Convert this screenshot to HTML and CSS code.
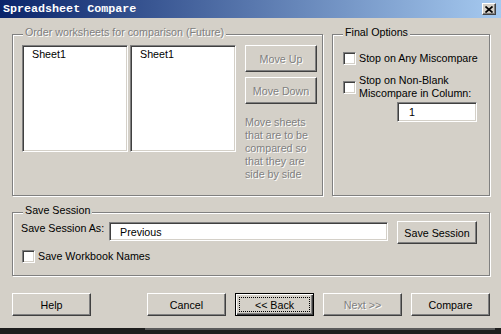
FILE: index.html
```html
<!DOCTYPE html>
<html lang="en">
<head>
    <meta charset="UTF-8">
    <meta name="viewport" content="width=device-width, initial-scale=1.0">
    <title>Spreadsheet Compare</title>
    <link rel="stylesheet" href="styles.css">
</head>
<body>

<div class="titlebar">
    <span class="title">Spreadsheet Compare</span>
    <span class="close-btn">
        <svg width="8" height="7" viewBox="0 0 8 7">
            <path d="M0.5 0.5 L7.5 6.5 M7.5 0.5 L0.5 6.5" stroke="#000" stroke-width="1.7" fill="none"/>
        </svg>
    </span>
</div>

<div class="dialog">
    <div class="top-row">
        <div class="group group-order">
            <span class="legend disabled-text">Order worksheets for comparison (Future)</span>
            <div class="listbox">
                <div class="list-item">Sheet1</div>
            </div>
            <div class="listbox listbox-right">
                <div class="list-item">Sheet1</div>
            </div>
            <div class="side-col">
                <button class="btn btn-move" disabled>Move Up</button>
                <button class="btn btn-move" disabled>Move Down</button>
                <p class="hint disabled-text">Move sheets<br>that are to be<br>compared so<br>that they are<br>side by side</p>
            </div>
        </div>

        <div class="group group-final">
            <span class="legend">Final Options</span>
            <label class="check-row">
                <input type="checkbox" class="checkbox">
                <span>Stop on Any Miscompare</span>
            </label>
            <label class="check-row check-row-second">
                <input type="checkbox" class="checkbox">
                <span>Stop on Non-Blank<br>Miscompare in Column:</span>
            </label>
            <input type="text" class="field field-column" value="1">
        </div>
    </div>

    <div class="group group-save">
        <span class="legend">Save Session</span>
        <div class="session-row">
            <label class="session-label" for="sessionName">Save Session As:</label>
            <input type="text" id="sessionName" class="field field-session" value="Previous">
            <button class="btn btn-save">Save Session</button>
        </div>
        <label class="check-row check-row-names">
            <input type="checkbox" class="checkbox">
            <span>Save Workbook Names</span>
        </label>
    </div>

    <div class="button-row">
        <button class="btn btn-nav">Help</button>
        <div class="nav-buttons">
            <button class="btn btn-nav">Cancel</button>
            <button class="btn btn-nav btn-default">&lt;&lt; Back</button>
            <button class="btn btn-nav" disabled>Next &gt;&gt;</button>
            <button class="btn btn-nav">Compare</button>
        </div>
    </div>
</div>

<div class="screen-edge">
    <div class="edge-line"></div>
</div>

</body>
</html>
```

FILE: styles.css
```css
body {
    margin: 0;
    width: 501px;
    height: 334px;
    overflow: hidden;
    background-color: #d4d0c8;
    font-family: "Liberation Sans", Arial, sans-serif;
    font-size: 10.7px;
    line-height: 13px;
    color: #000;
}
.titlebar {
    height: 18px;
    display: flex;
    align-items: center;
    justify-content: space-between;
    padding: 0 5px 0 3px;
    background: linear-gradient(to right, #0a246a, #a6caf0);
}
.title {
    color: #fff;
    font-family: "Liberation Mono", monospace;
    font-weight: bold;
    font-size: 11.7px;
}
.close-btn {
    width: 14px;
    height: 12px;
    box-sizing: border-box;
    display: flex;
    align-items: center;
    justify-content: center;
    background-color: #d4d0c8;
    border: 1px solid;
    border-color: #fff #404040 #404040 #fff;
    box-shadow: inset -1px -1px #808080;
}
.dialog {
    padding: 16px 11px 0 12px;
}
.top-row {
    display: flex;
    gap: 9px;
}
.group {
    position: relative;
    box-sizing: border-box;
    border: 1px solid #808080;
    box-shadow: inset 1px 1px #fff, 1px 1px #fff;
}
.legend {
    position: absolute;
    top: -9px;
    left: 10px;
    padding: 0 2px;
    background-color: #d4d0c8;
    white-space: nowrap;
}
.disabled-text {
    color: #808080;
    text-shadow: 1px 1px #fff;
}
.group-order {
    width: 311px;
    height: 162px;
    display: flex;
    align-items: flex-start;
    padding: 10px 0 0 9px;
}
.listbox {
    width: 106px;
    height: 107px;
    box-sizing: border-box;
    background-color: #fff;
    border: 1px solid;
    border-color: #808080 #fff #fff #808080;
    box-shadow: inset 1px 1px #404040, inset -1px -1px #d4d0c8;
    padding: 2px 0 0 9px;
}
.listbox-right {
    margin-left: 2px;
}
.side-col {
    width: 72px;
    margin-left: 9px;
    display: flex;
    flex-direction: column;
}
.btn {
    box-sizing: border-box;
    padding: 0;
    font-family: inherit;
    font-size: 10.7px;
    color: #000;
    background-color: #d4d0c8;
    border: 1px solid;
    border-color: #fff #404040 #404040 #fff;
    border-radius: 0;
    box-shadow: inset -1px -1px #808080;
}
.btn:disabled {
    color: #808080;
    text-shadow: 1px 1px #fff;
}
.btn-move {
    width: 72px;
    height: 27px;
    margin-bottom: 5px;
}
.hint {
    margin: 7px 0 0 0;
}
.group-final {
    width: 158px;
    height: 162px;
    padding: 17px 0 0 10px;
}
.check-row {
    display: flex;
    align-items: center;
    gap: 3px;
}
.check-row-second {
    margin-top: 9px;
}
.checkbox {
    appearance: none;
    margin: 0;
    flex: none;
    width: 13px;
    height: 13px;
    box-sizing: border-box;
    background-color: #fff;
    border: 1px solid;
    border-color: #808080 #fff #fff #808080;
    box-shadow: inset 1px 1px #404040, inset -1px -1px #d4d0c8;
}
.field {
    box-sizing: border-box;
    margin: 0;
    font-family: inherit;
    font-size: 10.7px;
    color: #000;
    background-color: #fff;
    border: 1px solid;
    border-color: #808080 #fff #fff #808080;
    box-shadow: inset 1px 1px #404040, inset -1px -1px #d4d0c8;
    outline: none;
}
.field-column {
    display: block;
    width: 80px;
    height: 20px;
    margin: 2px 0 0 54px;
    padding: 0 0 0 11px;
}
.group-save {
    width: 478px;
    height: 64px;
    margin-top: 16px;
    padding: 8px 0 0 8px;
}
.session-row {
    display: flex;
    align-items: flex-start;
}
.session-label {
    width: 88px;
    margin-top: 1px;
}
.field-session {
    width: 279px;
    height: 19px;
    margin-top: 1px;
    padding: 0 0 0 10px;
}
.btn-save {
    width: 80px;
    height: 23px;
    margin-left: 9px;
}
.check-row-names {
    margin: 6px 0 0 1px;
}
.button-row {
    display: flex;
    margin-top: 17px;
}
.nav-buttons {
    display: flex;
    gap: 9px;
    margin-left: auto;
}
.btn-nav {
    width: 79px;
    height: 23px;
}
.btn-default {
    border-color: #000;
    box-shadow: inset 1px 1px #fff, inset -1px -1px #404040, inset -2px -2px #808080;
    outline: 1px dotted #000;
    outline-offset: -5px;
}
.screen-edge {
    margin-top: 12px;
    height: 6px;
    background-color: #1e1e1e;
}
.edge-line {
    width: 350px;
    height: 2px;
    margin-left: 145px;
    background-color: #5a5a5a;
}
```
